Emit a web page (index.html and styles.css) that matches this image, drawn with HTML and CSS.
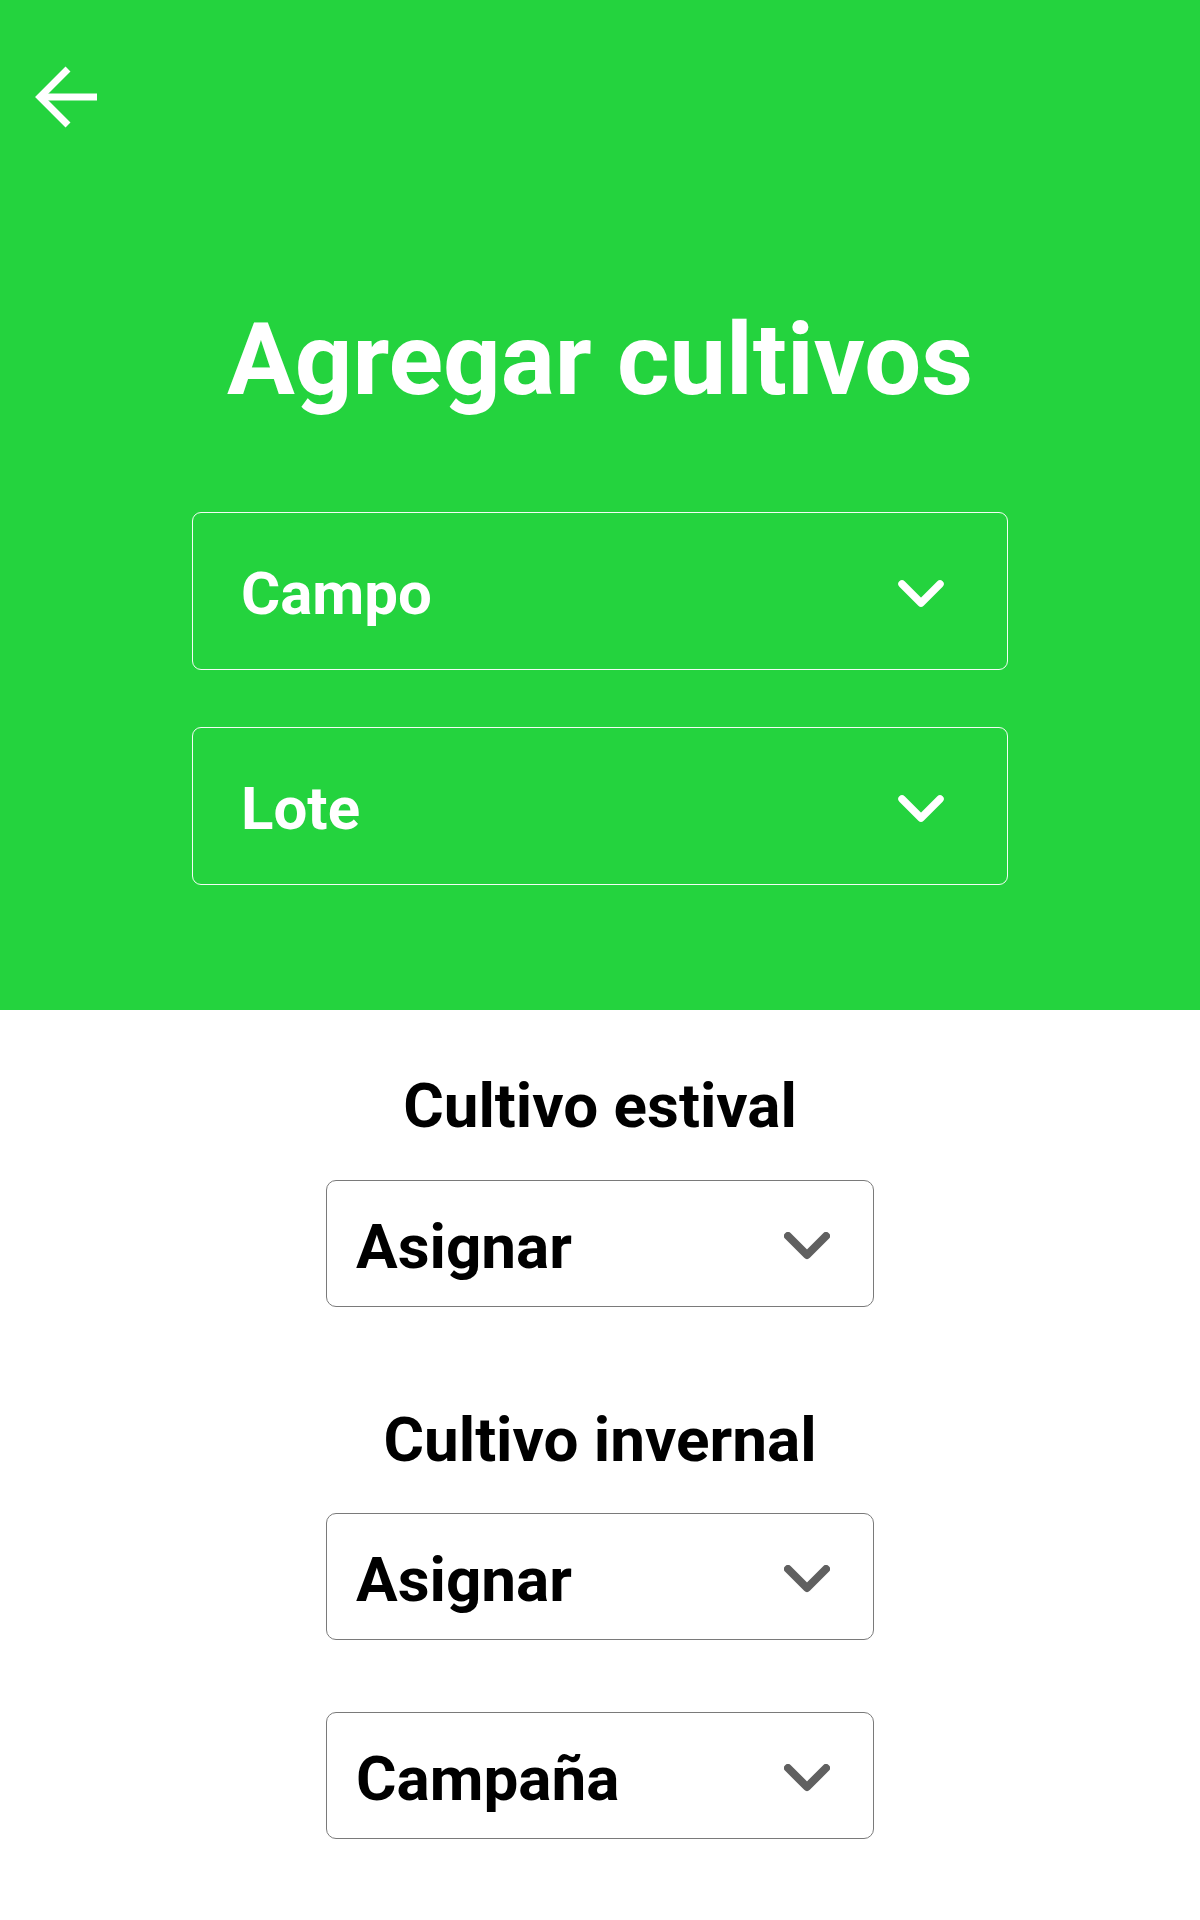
FILE: index.html
```html
<!DOCTYPE html>
<html lang="es">
<head>
<meta charset="utf-8">
<title>Agregar cultivos</title>
<link rel="stylesheet" href="styles.css">
</head>
<body>
<header class="hero">
  <button class="back" aria-label="Volver">
    <svg width="72" height="72" viewBox="0 0 72 72"><path d="M67 36H11" fill="none" stroke="#fff" stroke-width="7"/><path d="M38 8L10 36L38 64" fill="none" stroke="#fff" stroke-width="7"/></svg>
  </button>
  <h1 class="title">Agregar cultivos</h1>
  <div class="select select--light">
    <span class="select__label">Campo</span>
    <svg class="chev" width="46" height="28" viewBox="0 0 46 28"><polyline points="4,4 23,23 42,4" fill="none" stroke="currentColor" stroke-width="7.5" stroke-linecap="round" stroke-linejoin="round"/></svg>
  </div>
  <div class="select select--light">
    <span class="select__label">Lote</span>
    <svg class="chev" width="46" height="28" viewBox="0 0 46 28"><polyline points="4,4 23,23 42,4" fill="none" stroke="currentColor" stroke-width="7.5" stroke-linecap="round" stroke-linejoin="round"/></svg>
  </div>
</header>
<main class="form">
  <section class="group">
    <h2 class="group__title">Cultivo estival</h2>
    <div class="select select--dark">
      <span class="select__label">Asignar</span>
      <svg class="chev" width="46" height="28" viewBox="0 0 46 28"><polyline points="4,4 23,23 42,4" fill="none" stroke="currentColor" stroke-width="8" stroke-linecap="round" stroke-linejoin="round"/></svg>
    </div>
  </section>
  <section class="group group--second">
    <h2 class="group__title">Cultivo invernal</h2>
    <div class="select select--dark">
      <span class="select__label">Asignar</span>
      <svg class="chev" width="46" height="28" viewBox="0 0 46 28"><polyline points="4,4 23,23 42,4" fill="none" stroke="currentColor" stroke-width="8" stroke-linecap="round" stroke-linejoin="round"/></svg>
    </div>
    <div class="select select--dark select--spaced">
      <span class="select__label">Campaña</span>
      <svg class="chev" width="46" height="28" viewBox="0 0 46 28"><polyline points="4,4 23,23 42,4" fill="none" stroke="currentColor" stroke-width="8" stroke-linecap="round" stroke-linejoin="round"/></svg>
    </div>
  </section>
</main>
</body>
</html>
```
FILE: styles.css
```css
* { box-sizing: border-box; }
html, body { margin: 0; padding: 0; background: #fff; }
body { font-family: Roboto, "Liberation Sans", sans-serif; }

.hero {
  background: #24d33e;
  padding: 61px 0 125px;
  display: flex;
  flex-direction: column;
  align-items: center;
}
.back {
  align-self: flex-start;
  margin-left: 30px;
  padding: 0;
  border: 0;
  background: none;
  width: 72px;
  height: 72px;
  display: block;
}
.back svg { display: block; }

.title {
  margin: 166px 0 92px;
  font-size: 101px;
  font-weight: 700;
  line-height: 1.2;
  color: #fff;
  text-align: center;
}

.select {
  display: flex;
  align-items: center;
  justify-content: space-between;
}
.select__label { font-weight: 700; }
.chev { display: block; flex: none; }

.select--light {
  width: 816px;
  height: 158px;
  border: 1.5px solid rgba(255,255,255,0.95);
  border-radius: 9px;
  padding: 5px 63px 0 48px;
  color: #fff;
  font-size: 60px;
}
.select--light + .select--light { margin-top: 57px; }

.form {
  display: flex;
  flex-direction: column;
  align-items: center;
  padding: 59px 0 60px;
}
.group {
  display: flex;
  flex-direction: column;
  align-items: center;
}
.group--second { margin-top: 96px; }
.group__title {
  margin: 0 0 36px;
  font-size: 62px;
  font-weight: 700;
  line-height: 1.2;
  color: #000;
}
.select--dark {
  width: 548px;
  height: 127px;
  border: 1.5px solid #7a7a7a;
  border-radius: 10px;
  padding: 6px 43px 0 29px;
  font-size: 62px;
  color: #000;
}
.select--dark .chev { color: #606060; }
.select--spaced { margin-top: 72px; }
```
